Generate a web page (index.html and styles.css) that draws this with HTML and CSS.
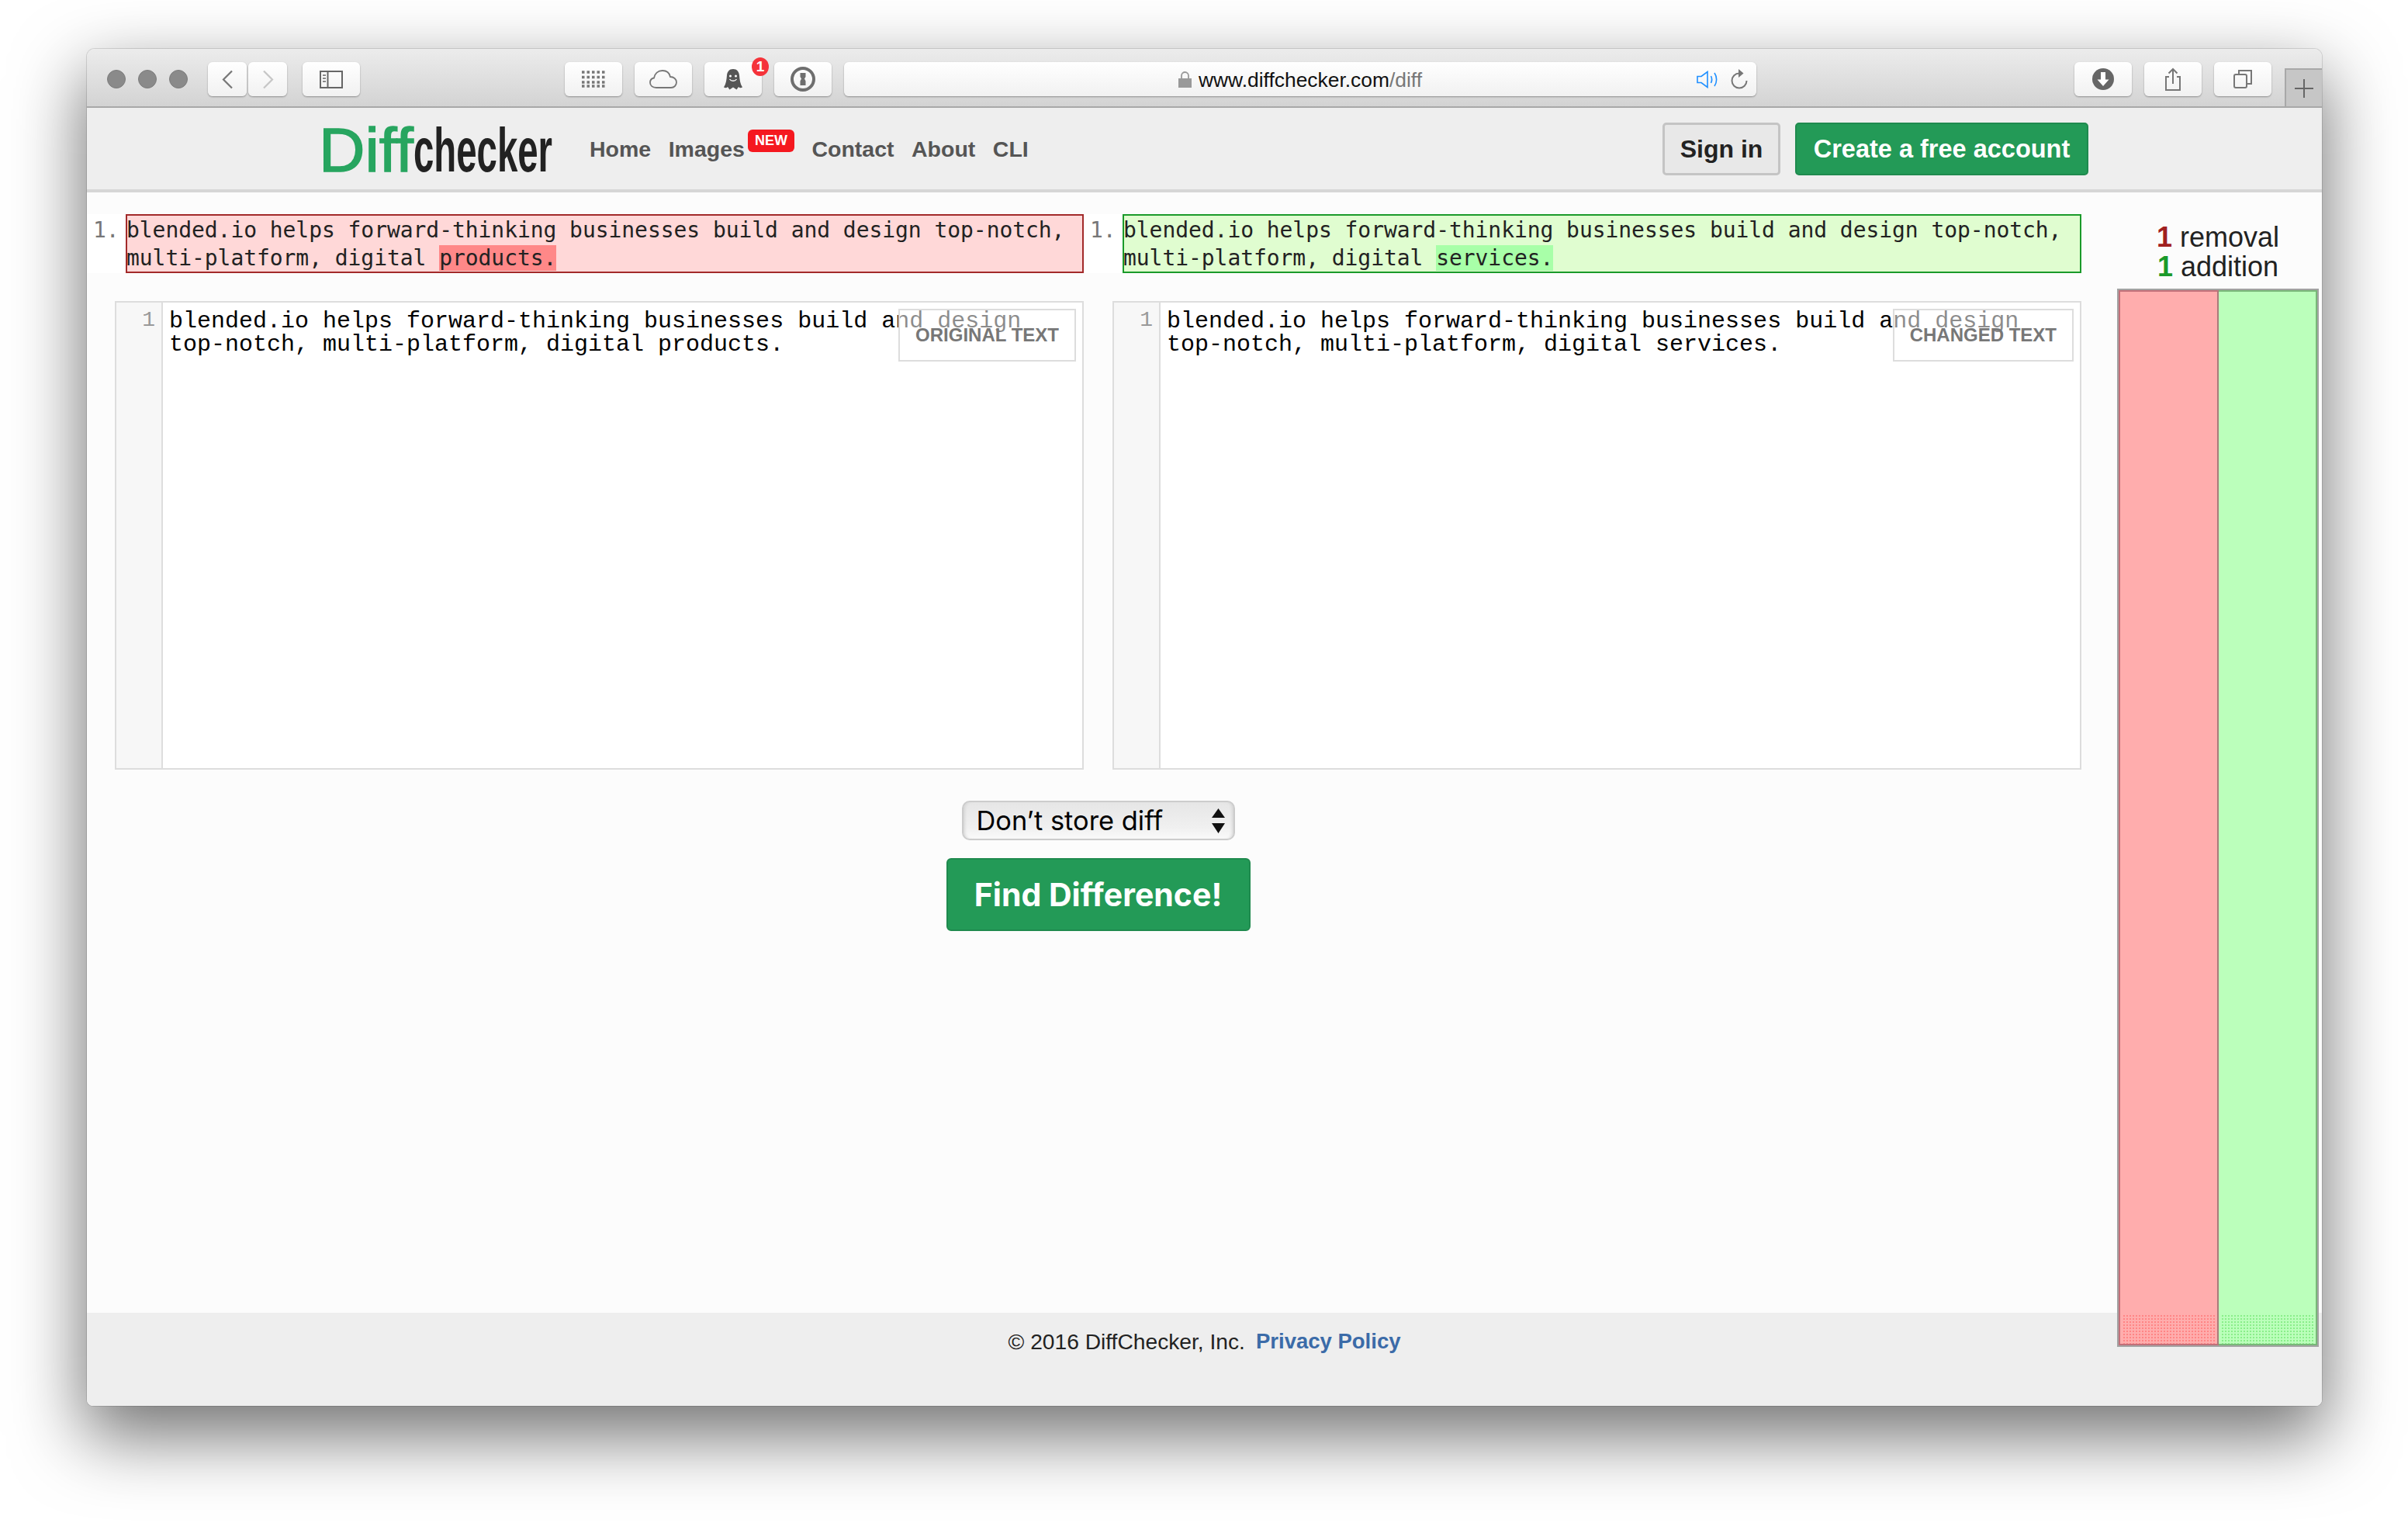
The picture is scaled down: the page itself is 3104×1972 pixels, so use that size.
FILE: index.html
```html
<!DOCTYPE html>
<html lang="en">
<head>
    <meta charset="UTF-8">
    <title>Diffchecker</title>
    <link rel="stylesheet" href="styles.css">
</head>
<body>
<div class="window">
    <div class="toolbar">
        <div class="dots"><span class="dot"></span><span class="dot"></span><span class="dot"></span></div>
        <div class="nav-btns">
            <div class="tbtn tbtn-back">
                <svg width="15" height="25" viewBox="0 0 15 25"><path d="M13 1.500 2 12.500l11 11" fill="none" stroke="#777" stroke-width="2.200"/></svg>
            </div>
            <div class="tbtn tbtn-back">
                <svg width="15" height="25" viewBox="0 0 15 25"><path d="M2 1.500l11 11-11 11" fill="none" stroke="#c6c6c6" stroke-width="2.200"/></svg>
            </div>
        </div>
        <div class="tbtn tbtn-sidebar">
            <svg width="30" height="23" viewBox="0 0 30 23"><rect x="1" y="1" width="28" height="21" fill="none" stroke="#666" stroke-width="2"/><path d="M10.500 1v21" stroke="#666" stroke-width="2"/><path d="M4 6h4M4 10h4M4 14h4" stroke="#888" stroke-width="2"/></svg>
        </div>
        <div class="ext-btns">
            <div class="tbtn">
                <svg width="30" height="22" viewBox="0 0 30 22"><path d="M0 2h30M0 8.500h30M0 15h30M0 20h30" stroke="#777" stroke-width="3.500" stroke-dasharray="3.500 3"/></svg>
            </div>
            <div class="tbtn">
                <svg width="36" height="24" viewBox="0 0 36 24"><path d="M9 23C4 23 1 20 1 16.500c0-3 2-5.500 5-6C7 5 11 1 17 1c5.500 0 9 3.500 10 8 4.500 0 8 3 8 7s-3 7-7 7z" fill="none" stroke="#777" stroke-width="1.800"/></svg>
            </div>
            <div class="tbtn tbtn-ghost">
                <svg width="26" height="28" viewBox="0 0 26 28"><path d="M13 1C8 1 5.500 4.500 5 9c-.5 6-1 11-4 15.500 2 1 3.500 1 5-.5l2.500 3.500L13 24.500l4.500 3L20 24c1.500 1.500 3 1.500 5 .5-3-4.500-3.500-9.500-4-15.500C20.500 4.500 18 1 13 1z" fill="#555"/><circle cx="9.500" cy="10" r="1.500" fill="#fff"/><circle cx="16.500" cy="10" r="1.500" fill="#fff"/><path d="M8.500 14c2 3 7 3 9 0" fill="none" stroke="#fff" stroke-width="1.300"/></svg>
                <span class="ext-badge">1</span>
            </div>
            <div class="tbtn">
                <svg width="32" height="32" viewBox="0 0 32 32"><circle cx="16" cy="16" r="14" fill="none" stroke="#6e6e6e" stroke-width="4"/><path d="M12.500 8h7v5l-1.500 2.500 1.500 3V24h-7v-5.500l1.500-3-1.500-2.500z" fill="#6e6e6e"/></svg>
            </div>
        </div>
        <div class="address">
            <span></span>
            <div class="url">
                <svg width="17" height="21" viewBox="0 0 17 21"><path d="M4 10V5.500a4.500 4.500 0 0 1 9 0V10" fill="none" stroke="#999" stroke-width="1.800"/><rect y="9" width="17" height="12" fill="#999"/></svg>
                <span class="url-text">www.diffchecker.com<span class="url-path">/diff</span></span>
            </div>
            <div class="addr-icons">
                <svg width="30" height="23" viewBox="0 0 30 23"><path d="M1 7.500h5l8-6v20l-8-6H1z" fill="none" stroke="#1e8fff" stroke-width="1.600"/><path d="M18.500 7c1.500 3 1.500 6 0 9M23 3c3.500 5 3.500 12 0 17" fill="none" stroke="#1e8fff" stroke-width="1.600"/></svg>
                <svg width="22" height="26" viewBox="0 0 22 26"><path d="M11 5.500A9.500 9.500 0 1 0 20.500 15" fill="none" stroke="#777" stroke-width="2"/><path d="M10 0l6.500 5.500-6.500 5.500z" fill="#777"/></svg>
            </div>
        </div>
        <div class="right-btns">
            <div class="tbtn">
                <svg width="28" height="28" viewBox="0 0 28 28"><circle cx="14" cy="14" r="14" fill="#666"/><path d="M11 5h6v9.500h4.500L14 23l-7.500-8.500H11z" fill="#fff"/></svg>
            </div>
            <div class="tbtn">
                <svg width="22" height="30" viewBox="0 0 22 30"><path d="M6 12H2v17h18V12h-4" fill="none" stroke="#777" stroke-width="2"/><path d="M11 21V2M5.500 7.500 11 2l5.500 5.500" fill="none" stroke="#777" stroke-width="2"/></svg>
            </div>
            <div class="tbtn">
                <svg width="24" height="24" viewBox="0 0 24 24"><rect x="1" y="6" width="16" height="17" rx="2" fill="none" stroke="#777" stroke-width="2"/><path d="M7 5V1h16v17h-5" fill="none" stroke="#777" stroke-width="2"/></svg>
            </div>
        </div>
        <div class="new-tab">
            <svg width="24" height="24" viewBox="0 0 24 24"><path d="M12 0v24M0 12h24" stroke="#666" stroke-width="2"/></svg>
        </div>
    </div>

    <div class="header">
        <svg class="logo" width="300" height="62" viewBox="0 0 300 62">
            <text class="logo-diff" x="-1" y="60" textLength="122" lengthAdjust="spacingAndGlyphs">Diff</text>
            <text class="logo-checker" x="121" y="60" textLength="179" lengthAdjust="spacingAndGlyphs">checker</text>
        </svg>
        <nav class="nav">
            <a>Home</a>
            <a class="nav-images">Images<span class="new-badge">NEW</span></a>
            <a>Contact</a>
            <a>About</a>
            <a>CLI</a>
        </nav>
        <div class="auth">
            <a class="btn-signin">Sign in</a>
            <a class="btn-create">Create a free account</a>
        </div>
    </div>

    <div class="main">
        <div class="diff-row">
            <div class="diff-cell">
                <span class="diff-num">1.</span>
                <div class="diff-box diff-removed"><div class="diff-text">blended.io helps forward-thinking businesses build and design top-notch, multi-platform, digital <span class="hl-removed">products.</span></div></div>
            </div>
            <div class="diff-cell">
                <span class="diff-num">1.</span>
                <div class="diff-box diff-added"><div class="diff-text">blended.io helps forward-thinking businesses build and design top-notch, multi-platform, digital <span class="hl-added">services.</span></div></div>
            </div>
        </div>

        <div class="editors">
            <div class="editor">
                <div class="gutter">1</div>
                <div class="code">blended.io helps forward-thinking businesses build and design top-notch, multi-platform, digital products.</div>
                <div class="editor-label">ORIGINAL TEXT</div>
            </div>
            <div class="editor">
                <div class="gutter">1</div>
                <div class="code">blended.io helps forward-thinking businesses build and design top-notch, multi-platform, digital services.</div>
                <div class="editor-label">CHANGED TEXT</div>
            </div>
        </div>

        <div class="controls">
            <div class="select-wrap">
                <select class="store-select">
                    <option>Don’t store diff</option>
                </select>
                <svg class="select-arrows" width="17" height="32" viewBox="0 0 17 32"><path d="M8.500 0 17 12H0zM8.500 32 0 19h17z" fill="#111"/></svg>
            </div>
            <button class="btn-find">Find Difference!</button>
        </div>
    </div>

    <div class="footer">
        <span class="copyright">© 2016 DiffChecker, Inc.</span>
        <a class="privacy">Privacy Policy</a>
    </div>

    <div class="sidebar">
        <div class="stats">
            <div><b class="num-removed">1</b> removal</div>
            <div><b class="num-added">1</b> addition</div>
        </div>
        <div class="minimap">
            <div class="pane pane-red"><div class="pane-dither"></div></div>
            <div class="pane pane-green"><div class="pane-dither"></div></div>
        </div>
    </div>
</div>
</body>
</html>
```

FILE: styles.css
```css
* {
    box-sizing: border-box;
}
html, body {
    margin: 0;
    height: 100%;
}
body {
    font-family: "Liberation Sans", Arial, sans-serif;
    background-color: #fff;
    color: #222;
    padding: 63px 111px 0 112px;
    overflow: hidden;
}
.window {
    position: relative;
    height: 1749px;
    display: flex;
    flex-direction: column;
    background-color: #fcfcfc;
    border-radius: 10px 10px 8px 8px;
    box-shadow: 0 36px 90px 4px rgba(0,0,0,0.55), 0 0 0 1px rgba(0,0,0,0.12);
}

/* safari chrome */
.toolbar {
    height: 76px;
    flex: none;
    display: flex;
    align-items: flex-start;
    padding-top: 17px;
    padding-left: 26px;
    background: linear-gradient(#ececec, #d3d3d3);
    border-bottom: 2px solid #a8a8a8;
    border-radius: 10px 10px 0 0;
}
.dots {
    display: flex;
    gap: 16px;
    margin-top: 10px;
}
.dot {
    width: 24px;
    height: 24px;
    border-radius: 50%;
    background-color: #8a8a8a;
    border: 1px solid #7c7c7c;
}
.tbtn {
    position: relative;
    width: 74px;
    height: 44px;
    display: flex;
    align-items: center;
    justify-content: center;
    background: linear-gradient(#fff, #f1f1f1);
    border-radius: 6px;
    box-shadow: 0 1px 2px rgba(0,0,0,0.35);
}
.tbtn-back {
    width: 50px;
}
.nav-btns {
    display: flex;
    gap: 2px;
    margin-left: 26px;
}
.tbtn-sidebar {
    margin-left: 20px;
}
.ext-btns {
    display: flex;
    gap: 16px;
    margin-left: 264px;
}
.ext-badge {
    position: absolute;
    top: -6px;
    right: -9px;
    width: 22px;
    height: 24px;
    border-radius: 50%;
    background-color: #f5333a;
    color: #fff;
    font-size: 19px;
    font-weight: bold;
    line-height: 24px;
    text-align: center;
}
.address {
    width: 1176px;
    height: 44px;
    margin-left: 16px;
    display: grid;
    grid-template-columns: 1fr auto 1fr;
    align-items: center;
    padding: 0 11px;
    background: linear-gradient(#fff, #f1f1f1);
    border-radius: 6px;
    box-shadow: 0 1px 2px rgba(0,0,0,0.35);
}
.url {
    display: flex;
    align-items: center;
    gap: 9px;
    font-size: 26.4px;
    color: #111;
}
.url-text {
    padding-top: 2px;
}
.url-path {
    color: #777;
}
.addr-icons {
    display: flex;
    justify-content: flex-end;
    align-items: center;
    gap: 14px;
}
.right-btns {
    display: flex;
    gap: 16px;
    margin-left: 410px;
}
.new-tab {
    width: 48px;
    height: 49px;
    align-self: flex-end;
    margin-left: 17px;
    display: flex;
    align-items: center;
    justify-content: center;
    background-color: #c6c6c6;
    border-top: 2px solid #a8a8a8;
    border-left: 2px solid #a8a8a8;
}

/* site header */
.header {
    height: 109px;
    flex: none;
    display: flex;
    align-items: center;
    padding: 1px 301px 0 300px;
    background-color: #eee;
    border-bottom: 4px solid #d6d6d6;
}
.logo {
    flex: none;
    overflow: visible;
}
.logo-diff {
    font-size: 80px;
    fill: #27a55f;
    stroke: #27a55f;
    stroke-width: 1.5px;
}
.logo-checker {
    font-size: 80px;
    font-weight: bold;
    fill: #222;
}
.nav {
    display: flex;
    gap: 22.5px;
    margin-left: 48px;
    font-size: 28.5px;
    font-weight: bold;
    color: #555;
}
.nav-images {
    position: relative;
    padding-right: 64px;
}
.new-badge {
    position: absolute;
    top: -9px;
    right: 0;
    width: 60px;
    height: 29px;
    border-radius: 6px;
    background-color: #f5181f;
    color: #fff;
    font-size: 18px;
    line-height: 29px;
    text-align: center;
}
.auth {
    display: flex;
    gap: 19px;
    margin-left: auto;
}
.btn-signin, .btn-create {
    height: 68px;
    display: flex;
    align-items: center;
    justify-content: center;
    font-size: 32.5px;
    font-weight: bold;
    border-radius: 5px;
}
.btn-signin {
    width: 152px;
    background-color: #e8e8e8;
    border: 3px solid #c4c4c4;
    color: #222;
    font-size: 32px;
}
.btn-create {
    width: 378px;
    background-color: #239a57;
    border: 2px solid #1f8a4e;
    color: #fff;
}

/* diff output + inputs */
.main {
    flex: 1;
    padding: 28px 310px 0 0;
}
.diff-row {
    display: grid;
    grid-template-columns: 1285px 1286px;
    background-color: #fff;
}
.diff-cell {
    display: flex;
}
.diff-num {
    width: 50px;
    flex: none;
    padding: 3px 0 0 8px;
    color: #777;
    font: 28px/36px "DejaVu Sans Mono", monospace;
}
.diff-box {
    flex: 1;
    height: 76px;
    border: 2px solid;
}
.diff-text {
    margin: 1px 0 0 -1px;
    color: #222;
    font: 28px/36px "DejaVu Sans Mono", monospace;
    letter-spacing: -0.06px;
}
.diff-removed {
    background-color: #ffd8d8;
    border-color: #a22a2a;
}
.diff-added {
    background-color: #e0fdd0;
    border-color: #1a9a2a;
}
.hl-removed {
    background-color: #ff8888;
}
.hl-added {
    background-color: #a8ffa8;
}
.editors {
    display: flex;
    gap: 37px;
    margin-top: 36px;
    padding-left: 36px;
}
.editor {
    position: relative;
    flex: 1;
    height: 604px;
    display: flex;
    background-color: #fff;
    border: 2px solid #ddd;
}
.gutter {
    width: 60px;
    flex: none;
    padding: 8px 8px 0 0;
    background-color: #f7f7f7;
    border-right: 2px solid #ddd;
    color: #999;
    font: 28px/30px "Liberation Mono", monospace;
    text-align: right;
}
.code {
    flex: 1;
    padding: 9px 9px 0 8px;
    color: #000;
    font: 30px/30px "Liberation Mono", monospace;
}
.editor-label {
    position: absolute;
    top: 8px;
    right: 8px;
    height: 68px;
    padding: 0 20px;
    display: flex;
    align-items: center;
    background-color: rgba(255,255,255,0.55);
    border: 2px solid #ddd;
    color: #777;
    font-size: 24px;
    font-weight: bold;
}
.controls {
    display: flex;
    flex-direction: column;
    align-items: center;
    gap: 23px;
    margin-top: 40px;
    padding-left: 36px;
}
.select-wrap {
    position: relative;
}
.store-select {
    display: block;
    width: 352px;
    height: 51px;
    padding: 0 0 0 17px;
    appearance: none;
    background: linear-gradient(#e6e6e6, #f0f0f0 70%, #fafafa);
    border: 2px solid #ccc;
    border-radius: 10px;
    box-shadow: inset 4px 0 4px -3px #ccc, inset -4px 0 4px -3px #ccc;
    color: #000;
    font-family: Inter, sans-serif;
    font-size: 34.4px;
}
.select-arrows {
    position: absolute;
    top: 10px;
    right: 13px;
    pointer-events: none;
}
.btn-find {
    width: 392px;
    height: 94px;
    background-color: #239a57;
    border: 2px solid #1f8a4e;
    border-radius: 6px;
    color: #fff;
    font-family: Inter, sans-serif;
    font-size: 41px;
    font-weight: bold;
}

.footer {
    height: 120px;
    flex: none;
    display: flex;
    justify-content: center;
    gap: 14px;
    padding-top: 21px;
    background-color: #eee;
    border-radius: 0 0 8px 8px;
    line-height: 32px;
}
.copyright {
    font-size: 28.2px;
}
.privacy {
    color: #3b6ba8;
    font-size: 27.5px;
    font-weight: bold;
}

/* stats + minimap float over the page */
.sidebar {
    position: absolute;
    top: 224px;
    right: 4px;
    width: 260px;
}
.stats {
    height: 85px;
    text-align: center;
    font-size: 36px;
    line-height: 38px;
}
.num-removed {
    color: #a02020;
}
.num-added {
    color: #1a9a2a;
}
.minimap {
    height: 1364px;
    display: flex;
    border: 2px solid #a3a3a3;
}
.pane {
    position: relative;
    flex: 1;
    border: 2px solid;
}
.pane-red {
    background-color: #ffadad;
    border-color: #c27079;
    border-right-color: #a97a7a;
}
.pane-green {
    background-color: #bbffbb;
    border-color: #78b878;
    border-left: none;
}
.pane-dither {
    position: absolute;
    left: 3px;
    right: 3px;
    bottom: 0;
    height: 38px;
    background-size: 4px 4px;
}
.pane-red .pane-dither {
    background-image: radial-gradient(circle, #ff8585 1px, transparent 1.2px);
}
.pane-green .pane-dither {
    background-image: radial-gradient(circle, #8aee8a 1px, transparent 1.2px);
}
```
